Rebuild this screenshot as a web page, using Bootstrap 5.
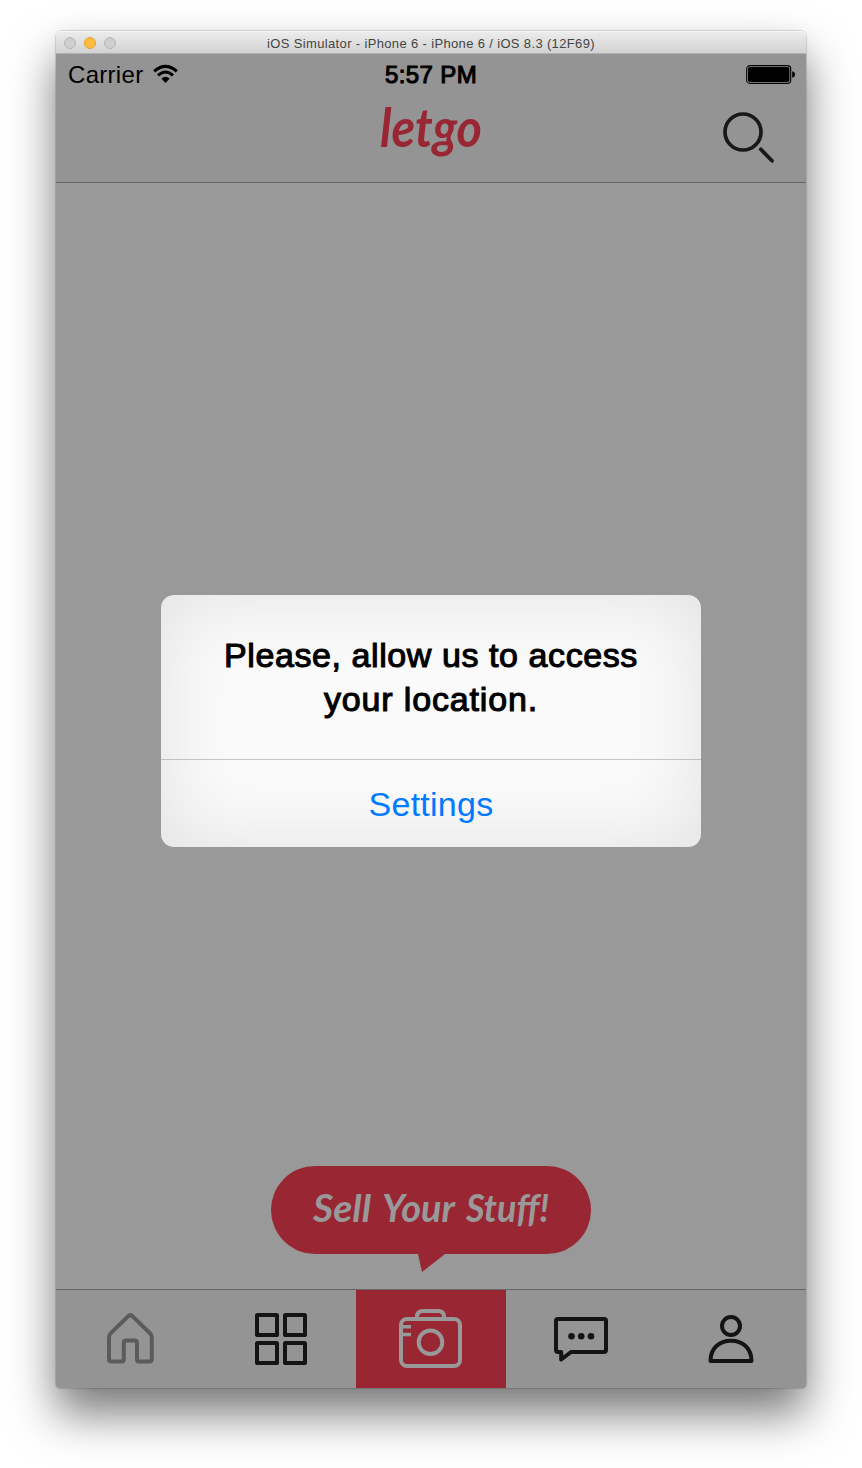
<!DOCTYPE html>
<html lang="en">
<head>
<meta charset="utf-8">
<meta name="viewport" content="width=device-width, initial-scale=1">
<title>iOS Simulator</title>
<link href="https://cdn.jsdelivr.net/npm/bootstrap@5.3.0/dist/css/bootstrap.min.css" rel="stylesheet">
<style>
  body { font-family: "Liberation Sans", sans-serif; height: 1468px; overflow: hidden; background: #fff; color: #000; }
  .sim-window { width: 750px; height: 1357px; margin: 31px 0 0 56px; border-radius: 6px 6px 4px 4px;
    box-shadow: 0 0 1px 1px rgba(0,0,0,.14), 0 26px 46px rgba(0,0,0,.52), 0 0 24px rgba(0,0,0,.03); }
  .title-strip { height: 23px; background: linear-gradient(#ececec, #d2d2d2); border-top: 1px solid #f6f6f6;
    border-bottom: 1px solid #b1b1b1; border-radius: 5px 5px 0 0; font-size: 13px; color: #444; line-height: 23px; }
  .light { width: 12px; height: 12px; border-radius: 50%; background: #cfcfcf; border: 1px solid #b5b5b5; }
  .light-min { background: #ffbd3e; border-color: #dfa036; }
  .lights { left: 8px; top: 5px; }
  .title-text { letter-spacing: .35px; }
  .chrome { background: #949494; }
  .status-line { height: 42px; font-size: 24px; line-height: 42px; }
  .status-side { width: 200px; }
  .carrier { letter-spacing: .3px; }
  .medium { -webkit-text-stroke: 1.1px currentColor; }
  .clock { letter-spacing: .4px; }
  .brand-bar { height: 87px; border-bottom: 1px solid #666; }
  .screen { height: 1106px; background: #999; }
  .alert-box { width: 540px; height: 252px; margin-top: 412px; border-radius: 13px; overflow: hidden;
    background: #fafafa; box-shadow: inset 0 0 80px rgba(0,0,0,.1); }
  .alert-title { height: 165px; padding-top: 38px; font-size: 34px; line-height: 44px; letter-spacing: .58px;
    border-bottom: 1px solid rgba(0,0,0,.2); }
  .second-line { letter-spacing: .85px; }
  .alert-action { height: 87px; font-size: 34px; line-height: 88px; color: #007aff; letter-spacing: .25px; }
  .sell { margin-top: 319px; }
  .tabs { height: 99px; border-top: 1px solid #666; border-radius: 0 0 3px 3px; overflow: hidden; }
  .tab-sell { background: #992633; }
  svg { display: block; }
  .script-type { font-family: "Lato", sans-serif; font-style: italic; font-weight: 700; }
</style>
</head>
<body>
<div class="sim-window d-flex flex-column">
  <div class="title-strip position-relative text-center">
    <div class="lights position-absolute d-flex gap-2"><span class="light"></span><span class="light light-min"></span><span class="light"></span></div>
    <span class="title-text">iOS Simulator - iPhone 6 - iPhone 6 / iOS 8.3 (12F69)</span>
  </div>

  <header class="chrome">
    <div class="status-line d-flex justify-content-between">
      <div class="status-side d-flex" style="padding-left:12px">
        <span class="carrier">Carrier</span>
        <svg width="26" height="20" viewBox="0 0 26 20" style="margin:10px 0 0 10px">
          <g fill="none" stroke="#000" stroke-width="3.1"><path d="M1.200 7.400Q12.500 -2.600 23.800 7.400"/><path d="M5 11.400Q12.500 4.600 20 11.400"/></g>
          <path d="M8.300 14.600Q12.500 11 16.700 14.600L12.500 19Z"/>
        </svg>
      </div>
      <span class="clock medium">5:57 PM</span>
      <div class="status-side d-flex justify-content-end" style="padding-right:10px">
        <svg width="50" height="19" viewBox="0 0 50 19" style="margin-top:11px">
          <rect x=".7" y=".6" width="44" height="17.8" rx="3.2" fill="none" stroke="#000" stroke-width="1.1"/>
          <rect x="2" y="2" width="41.4" height="15" rx="1.8"/>
          <path d="M46.200 6.200Q49 6.800 49 9.500T46.200 12.800Z"/>
        </svg>
      </div>
    </div>
    <div class="brand-bar">
      <svg width="750" height="86" viewBox="0 0 750 86" role="img">
        <text class="script-type" x="324" y="51" font-size="53" textLength="102" lengthAdjust="spacingAndGlyphs" fill="#992633">letgo</text>
        <g fill="none" stroke="#181818" stroke-width="3.700"><circle cx="687" cy="36" r="18"/><path d="M704.800 53.300L716 64.800" stroke-linecap="round"/></g>
      </svg>
    </div>
  </header>

  <main class="screen d-flex flex-column align-items-center">
    <section class="alert-box text-center">
      <div class="alert-title medium">Please, allow us to access<br><span class="second-line">your location.</span></div>
      <div class="alert-action">Settings</div>
    </section>
    <svg class="sell" width="320" height="107" viewBox="0 0 320 107">
      <path fill="#992633" d="M44 0H276A44 44 0 0 1 276 88H174L151 106L147 88H44A44 44 0 0 1 44 0Z"/>
      <g class="script-type" font-size="38" fill="#999">
        <text x="42" y="56" textLength="58" lengthAdjust="spacingAndGlyphs">Sell</text>
        <text x="111" y="56" textLength="73" lengthAdjust="spacingAndGlyphs">Your</text>
        <text x="195" y="56" textLength="83" lengthAdjust="spacingAndGlyphs">Stuff!</text>
      </g>
    </svg>
  </main>

  <nav class="tabs chrome row row-cols-5 g-0">
    <div class="col"><svg width="150" height="98" viewBox="0 0 150 98"><path fill="none" stroke="#5b5b5b" stroke-width="4" stroke-linejoin="round" d="M53 47.500Q53 45 54.800 43.200L72.500 25.900Q74.300 24.300 76.100 25.900L94 43.200Q95.800 45 95.800 47.500V69Q95.800 71.500 93.300 71.500H83Q81 71.500 81 69V53Q81 50.500 78.500 50.500H70.300Q67.800 50.500 67.800 53V69Q67.800 71.500 65.800 71.500H55.500Q53 71.500 53 69Z"/></svg></div>
    <div class="col"><svg width="150" height="98" viewBox="0 0 150 98"><g fill="none" stroke="#141414" stroke-width="4"><rect x="51" y="25" width="20" height="20" rx=".6"/><rect x="79" y="25" width="20" height="20" rx=".6"/><rect x="51" y="53" width="20" height="20" rx=".6"/><rect x="79" y="53" width="20" height="20" rx=".6"/></g></svg></div>
    <div class="col tab-sell"><svg width="150" height="98" viewBox="0 0 150 98"><g fill="none" stroke="#999" stroke-width="4"><rect x="45" y="29" width="59" height="47" rx="6"/><path d="M61 28V27Q61 21 67 21H82Q88 21 88 27V28"/><circle cx="74.500" cy="52.300" r="11.800"/><path stroke-width="3.500" d="M46 36.800H55M46 44.500H55"/></g></svg></div>
    <div class="col"><svg width="150" height="98" viewBox="0 0 150 98"><path fill="none" stroke="#141414" stroke-width="4" stroke-linejoin="round" d="M52 29H98Q100 29 100 31V60Q100 62 98 62H65L55.200 69.500V62H52Q50 62 50 60V31Q50 29 52 29Z"/><g fill="#141414"><circle cx="65.500" cy="46.300" r="3.300"/><circle cx="75.200" cy="46.300" r="3.300"/><circle cx="85" cy="46.300" r="3.300"/></g></svg></div>
    <div class="col"><svg width="150" height="98" viewBox="0 0 150 98"><g fill="none" stroke="#141414" stroke-width="4" stroke-linejoin="round"><circle cx="75" cy="36" r="9"/><path d="M54.500 71C54.500 58 63.500 50.700 75 50.700S95.500 58 95.500 71Z"/></g></svg></div>
  </nav>
</div>
<script src="https://cdn.jsdelivr.net/npm/bootstrap@5.3.0/dist/js/bootstrap.bundle.min.js"></script>
</body>
</html>
